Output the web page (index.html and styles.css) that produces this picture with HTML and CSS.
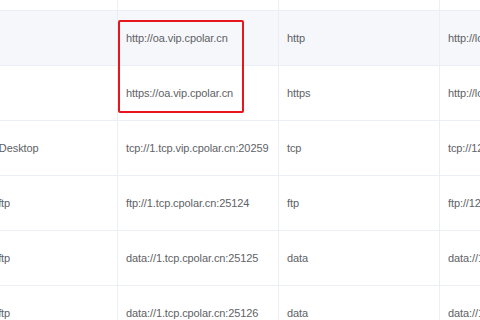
FILE: index.html
```html
<!DOCTYPE html>
<html>
<head>
<meta charset="utf-8">
<link rel="stylesheet" href="styles.css">
</head>
<body>
<div class="view">
  <div class="table">
    <div class="row top"><div class="cell"></div><div class="cell"></div><div class="cell"></div><div class="cell"></div></div>
    <div class="row hover"><div class="cell"></div><div class="cell">http://oa.vip.cpolar.cn</div><div class="cell">http</div><div class="cell">http://localhost:8080</div></div>
    <div class="row"><div class="cell"></div><div class="cell">https://oa.vip.cpolar.cn</div><div class="cell">https</div><div class="cell">http://localhost:8080</div></div>
    <div class="row"><div class="cell">Remote Desktop</div><div class="cell">tcp://1.tcp.vip.cpolar.cn:20259</div><div class="cell">tcp</div><div class="cell">tcp://127.0.0.1:3389</div></div>
    <div class="row"><div class="cell">website-ftp</div><div class="cell">ftp://1.tcp.cpolar.cn:25124</div><div class="cell">ftp</div><div class="cell">ftp://127.0.0.1:21</div></div>
    <div class="row"><div class="cell">website-ftp</div><div class="cell">data://1.tcp.cpolar.cn:25125</div><div class="cell">data</div><div class="cell">data://127.0.0.1:50001</div></div>
    <div class="row"><div class="cell">website-ftp</div><div class="cell">data://1.tcp.cpolar.cn:25126</div><div class="cell">data</div><div class="cell">data://127.0.0.1:50002</div></div>
  </div>
  <div class="mark"></div>
</div>
</body>
</html>
```
FILE: styles.css
```css
html, body {
  margin: 0;
  padding: 0;
  background: #fff;
}
.view {
  position: relative;
  width: 480px;
  height: 320px;
  overflow: hidden;
  font-family: "Liberation Sans", Arial, sans-serif;
  font-size: 11px;
  letter-spacing: -0.1px;
  color: #606266;
}
.table {
  margin-left: -60px;
  width: 700px;
}
.row {
  display: grid;
  grid-template-columns: 178px 161px 161px 200px;
  height: 55px;
  box-sizing: border-box;
  border-bottom: 1px solid #ebeef5;
}
.row.top {
  height: 11px;
}
.row.hover {
  background: #f5f7fa;
}
.cell {
  border-right: 1px solid #ebeef5;
  padding-left: 8px;
  display: flex;
  align-items: center;
  white-space: nowrap;
  overflow: hidden;
}
.cell:first-child {
  padding-left: 18px;
}
.mark {
  position: absolute;
  left: 118px;
  top: 20px;
  width: 126px;
  height: 93px;
  box-sizing: border-box;
  border: 2px solid #e6161c;
  border-radius: 2px;
}
```
